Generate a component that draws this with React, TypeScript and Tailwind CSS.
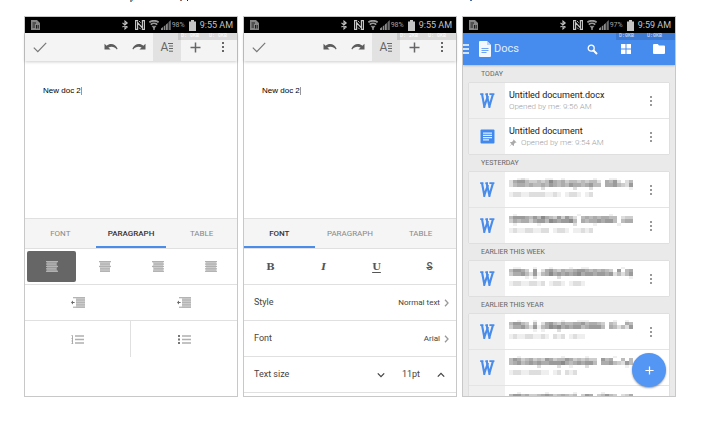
import React, { useState } from 'react';
import clsx from 'clsx';

type TabName = 'FONT' | 'PARAGRAPH' | 'TABLE';

const TABS: TabName[] = ['FONT', 'PARAGRAPH', 'TABLE'];

/* ---------- icons ---------- */

const MoreIcon = () => (
  <svg width="4" height="12" viewBox="0 0 4 12" fill="currentColor">
    <rect x="1" y="1" width="2" height="2" />
    <rect x="1" y="5" width="2" height="2" />
    <rect x="1" y="9" width="2" height="2" />
  </svg>
);

const UndoIcon = ({ flipped = false }: { flipped?: boolean }) => (
  <svg
    width="14"
    height="8"
    viewBox="0 0 14 8"
    className={clsx('text-[#5c5c5c]', flipped && '-scale-x-100')}
  >
    <path
      d="M0.5 0.8V6.6H6.6L4.4 4.6C7 3 10.6 3.4 12.8 6.4L13.6 5.8C11.9 1 6.3 -0.3 2.6 2.7Z"
      fill="currentColor"
    />
  </svg>
);

const CheckIcon = () => (
  <svg width="14" height="11" viewBox="0 0 14 11" fill="none" stroke="#777" strokeWidth="1.2">
    <path d="M0.8 5.6 4.8 9.6 13.2 0.8" />
  </svg>
);

const PlusIcon = ({ size }: { size: number }) => (
  <svg width={size} height={size} viewBox="0 0 11 11" stroke="currentColor" strokeWidth="1.5">
    <path d="M5.5 0.5V10.5M0.5 5.5H10.5" />
  </svg>
);

const Chevron = ({ d, faint = false }: { d: string; faint?: boolean }) => (
  <svg
    width="8"
    height="8"
    viewBox="0 0 8 8"
    fill="none"
    stroke={faint ? '#999' : '#444'}
    strokeWidth="1.3"
  >
    <path d={d} />
  </svg>
);

const LINES: Record<string, number[][]> = {
  left: [[0, 12], [0, 10], [0, 12], [0, 10], [0, 12]],
  center: [[0, 12], [1, 10], [0, 12], [1, 10], [1, 10]],
  right: [[0, 12], [2, 10], [0, 12], [2, 10], [1, 11]],
  justify: [[0, 12], [0, 12], [0, 12], [0, 12], [0, 12]],
};

const AlignIcon = ({ kind }: { kind: string }) => (
  <svg width="12" height="11" viewBox="0 0 12 11">
    <rect x="1" width="10" height="11" fill="currentColor" opacity="0.6" />
    {LINES[kind].map(([x, w], i) => (
      <rect key={i} x={x} y={i * 2.4} width={w} height="1.3" fill="currentColor" />
    ))}
  </svg>
);

const IndentIcon = () => (
  <svg width="14" height="11" viewBox="0 0 14 11">
    <path d="M0 5.5 2 3.6V4.9H3.6V6.1H2V7.4Z" fill="#666" />
    <rect x="5" width="9" height="11" fill="#d0d0d0" />
    {[0, 2.4, 4.8, 7.2, 9.6].map((y) => (
      <rect key={y} x={y === 0 || y === 9.6 ? 2 : 5} y={y} width={y === 0 || y === 9.6 ? 12 : 9} height="1.3" fill="#b4b4b4" />
    ))}
  </svg>
);

const ListIcon = ({ numbered = false }: { numbered?: boolean }) => (
  <svg width="13" height="9" viewBox="0 0 13 9">
    {numbered ? (
      <path d="M0.5 0.5H1.5V8.5M0.5 3.5H2M0.5 8.5H2.2M0.5 6H2" stroke="#a3a3a3" fill="none" strokeWidth="0.9" />
    ) : (
      <path d="M0 1H2M0 4.5H2M0 8H2" stroke="#777" strokeWidth="1.8" />
    )}
    <path d="M4 1H13M4 4.5H13M4 8H13" stroke="#b0b0b0" strokeWidth="1.5" />
  </svg>
);

// file type mark: two overlapping slab strokes
const WordMark = () => (
  <svg width="15" height="15" viewBox="0 0 15 15" fill="none" stroke="#4a8cea" strokeWidth="2.1">
    <path d="M2 1 4.3 13.4 7.9 3" />
    <path d="M6.6 1 9.4 13.4 12.9 1.4" />
    <path d="M0.2 1.1H3.4M5.4 1.1H8M9.4 1.1H14.4" strokeWidth="1.8" />
    <path d="M3.6 13.9H5.2M8.7 13.9H10.3" strokeWidth="1.6" />
  </svg>
);

const DocMark = () => (
  <svg width="15" height="15" viewBox="0 0 15 15">
    <rect x="0.5" y="0.5" width="14" height="14" rx="1" fill="#4189ee" />
    <path d="M3 4.2H12M3 6.4H12M3 8.6H12M3 10.8H9" stroke="#e3eefc" strokeWidth="1.2" />
  </svg>
);

const PinIcon = () => (
  <svg width="8" height="8" viewBox="0 0 8 8" fill="#aaa">
    <path d="M4.6 0.4 7.6 3.4 6.9 3.8 6.4 3.6 5 5 5 6.4 4.4 7 2.8 5.4 0.6 7.6 0.4 7.4 2.5 5.1 1 3.6 1.6 3 3 3 4.4 1.6 4.2 1.1Z" />
  </svg>
);

/* ---------- shared chrome ---------- */

function StatusBar({ battery, time }: { battery: string; time: string }) {
  return (
    <div className="flex h-4 items-center bg-black pr-1 pl-1.5 text-[#c4c4c4]">
      <svg width="9" height="10" viewBox="0 0 9 10">
        <path d="M0 0H6L9 3V10H0Z" fill="#858585" />
        <path d="M1.5 3H5M1.5 5H4M1.5 7H4M5.5 5V8.5M7.2 5V8.5" stroke="#1c1c1c" />
      </svg>
      <div className="ml-auto flex items-center">
        <svg width="8" height="10" viewBox="0 0 8 10" fill="none" stroke="currentColor" strokeWidth="1.1">
          <path d="M1.5 2.8 6.2 7 4 8.9V1.1L6.2 3 1.5 7.2" />
        </svg>
        <svg className="ml-1.5" width="10" height="10" viewBox="0 0 10 10" fill="none" stroke="currentColor">
          <path d="M3.2 0.6H0.6V9.4H2.6V2.6L7.4 8V0.6H9.4V9.4H6.8" strokeWidth="1.2" />
          <path d="M4 1 5.6 2.6M4.2 7.6 5.6 9.2" strokeWidth="0.9" />
        </svg>
        <svg className="ml-1" width="10" height="10" viewBox="0 0 10 10" fill="none" stroke="#999">
          <path d="M0.4 2.4C3 0.2 7 0.2 9.6 2.4" strokeWidth="1.8" />
          <path d="M1.8 4.6C3.6 3 6.4 3 8.2 4.6" strokeWidth="1.8" />
          <path d="M3 6.2H7L5 8.4Z" fill="#999" strokeWidth="0.6" />
          <path d="M5 7V10" strokeWidth="1.4" />
        </svg>
        <svg className="ml-0.5" width="10" height="10" viewBox="0 0 10 10">
          <path d="M0 10V8.4L2 7V10ZM2.7 10V6.4L4.4 5V10ZM5 10V4.6L6.8 3V10Z" fill="#8c8c8c" />
          <path d="M7.5 10V2.2L9.8 0V10Z" fill="#6b6b6b" />
        </svg>
        <span className="ml-px text-[7px] leading-none text-[#a0a0a0]">{battery}</span>
        <svg className="ml-1" width="7" height="11" viewBox="0 0 7 11" fill="currentColor">
          <path d="M2 0H5V1.4H7V11H0V1.4H2Z" />
        </svg>
        <span className="ml-1 text-[9px] leading-4">{time}</span>
      </div>
    </div>
  );
}

function NetSpeed({ down, up, blue = false }: { down: string; up: string; blue?: boolean }) {
  return (
    <div
      className={clsx(
        "pointer-events-none absolute top-0 right-0 grid h-[7px] w-[59px] grid-cols-2 pl-[3px] font-['Liberation_Mono',monospace] text-[5px] leading-[7px]",
        blue ? 'bg-[#3b79d2] text-white/80' : 'bg-black/10 text-white',
      )}
    >
      <span>{down}</span>
      <span>{up}</span>
    </div>
  );
}

/* ---------- editor screens ---------- */

function ToolButton({ label, active, children }: { label: string; active?: boolean; children: React.ReactNode }) {
  return (
    <button
      aria-label={label}
      className={clsx('flex h-7 w-7 items-center justify-center text-[#666]', active && 'bg-[#e2e2e2]')}
    >
      {children}
    </button>
  );
}

function ParagraphPanel() {
  const [align, setAlign] = useState('left');
  return (
    <div>
      <div className="grid h-9 grid-cols-4 border-b border-[#e0e0e0]">
        {Object.keys(LINES).map((kind) => (
          <button
            key={kind}
            aria-label={`Align ${kind}`}
            onClick={() => setAlign(kind)}
            className={clsx(
              'm-0.5 flex items-center justify-center rounded-xs',
              align === kind ? 'bg-[#666] text-[#b4b4b4]' : 'text-[#b0b0b0]',
            )}
          >
            <AlignIcon kind={kind} />
          </button>
        ))}
      </div>
      <div className="grid h-9 grid-cols-2 border-b border-[#e0e0e0]">
        <button aria-label="Decrease indent" className="flex items-center justify-center">
          <IndentIcon />
        </button>
        <button aria-label="Increase indent" className="flex items-center justify-center">
          <IndentIcon />
        </button>
      </div>
      <div className="grid h-9 grid-cols-2">
        <button aria-label="Numbered list" className="flex items-center justify-center border-r border-[#e0e0e0]">
          <ListIcon numbered />
        </button>
        <button aria-label="Bulleted list" className="flex items-center justify-center">
          <ListIcon />
        </button>
      </div>
    </div>
  );
}

function FontPanel() {
  const [size, setSize] = useState(11);
  const rows = [
    { label: 'Style', value: 'Normal text' },
    { label: 'Font', value: 'Arial' },
  ];
  return (
    <div className="text-[9px] text-[#444]">
      <div className="grid h-9 grid-cols-4 border-b border-[#e0e0e0] font-['DejaVu_Serif',serif] text-[10px] font-bold text-[#555]">
        <button aria-label="Bold">B</button>
        <button aria-label="Italic" className="italic">I</button>
        <button aria-label="Underline" className="underline underline-offset-2">U</button>
        <button aria-label="Strikethrough" className="font-['Roboto',sans-serif] font-medium line-through">S</button>
      </div>
      {rows.map((row) => (
        <button
          key={row.label}
          className="flex h-9 w-full items-center border-b border-[#e0e0e0] pr-1.5 pl-2.5"
        >
          <span>{row.label}</span>
          <span className="mr-0.5 ml-auto text-[8px]">{row.value}</span>
          <Chevron d="M3 0.8 6 4 3 7.2" faint />
        </button>
      ))}
      <div className="flex h-9 items-center border-b border-[#e0e0e0] pl-2.5">
        <span className="mr-auto">Text size</span>
        <button aria-label="Smaller" onClick={() => setSize(size - 1)} className="flex w-[30px] justify-center">
          <Chevron d="M0.8 2.4 4 5.6 7.2 2.4" />
        </button>
        <span className="w-[30px] text-center">{size}pt</span>
        <button aria-label="Larger" onClick={() => setSize(size + 1)} className="flex w-[30px] justify-center">
          <Chevron d="M0.8 5.6 4 2.4 7.2 5.6" />
        </button>
      </div>
    </div>
  );
}

function EditorScreen({ initialTab, down }: { initialTab: TabName; down: string }) {
  const [tab, setTab] = useState<TabName>(initialTab);

  return (
    <section className="flex flex-col border border-[#c8c8c8] bg-white pb-[3px]">
      <StatusBar battery="98%" time="9:55 AM" />
      <div className="relative flex h-7 items-center bg-[#f4f4f4] pl-2 shadow-[0_1px_3px_rgba(0,0,0,0.2)]">
        <button aria-label="Done" className="mr-auto">
          <CheckIcon />
        </button>
        <ToolButton label="Undo">
          <UndoIcon />
        </ToolButton>
        <ToolButton label="Redo">
          <UndoIcon flipped />
        </ToolButton>
        <ToolButton label="Format" active>
          <span className="text-[12px] leading-none">A</span>
          <svg width="5" height="9" viewBox="0 0 5 9" stroke="#666">
            <path d="M0 0.5H5M1 3H5M1 5.5H5M1 8.2H5" />
          </svg>
        </ToolButton>
        <ToolButton label="Insert">
          <PlusIcon size={11} />
        </ToolButton>
        <ToolButton label="More">
          <MoreIcon />
        </ToolButton>
        <NetSpeed down={down} up="U: 0KB" />
      </div>

      <div className="flex h-[157px] items-start pt-6 pl-[18px]">
        <textarea
          aria-label="Document"
          rows={1}
          defaultValue="New doc 2"
          className="field-sizing-content resize-none overflow-hidden font-['Liberation_Sans',sans-serif] text-[8px] leading-3 text-black outline-none"
        />
        <span className="mt-0.5 h-2 w-px bg-[#999]" />
      </div>

      <div role="tablist" className="grid h-[31px] grid-cols-3 border-y border-[#e0e0e0] bg-[#f5f5f5]">
        {TABS.map((name) => (
          <button
            key={name}
            role="tab"
            aria-selected={tab === name}
            onClick={() => setTab(name)}
            className={clsx(
              'border-b-2 pt-0.5 text-[8px]',
              tab === name ? 'border-[#4a8cea] font-medium text-[#333]' : 'border-transparent text-[#888]',
            )}
          >
            {name}
          </button>
        ))}
      </div>
      {tab === 'PARAGRAPH' && <ParagraphPanel />}
      {tab === 'FONT' && <FontPanel />}
    </section>
  );
}

/* ---------- file list screen ---------- */

interface DocFile {
  title?: string;
  opened?: string;
  pinned?: boolean;
  // darkness 0-9 per cell, for names that are obscured
  mosaic?: string[];
}

const GROUPS: { name: string; files: DocFile[] }[] = [
  {
    name: 'TODAY',
    files: [
      { title: 'Untitled document.docx', opened: 'Opened by me: 9:56 AM' },
      { title: 'Untitled document', opened: 'Opened by me: 9:54 AM', pinned: true },
    ],
  },
  {
    name: 'YESTERDAY',
    files: [
      {
        mosaic: [
          '00121000011001000000010001100000',
          '25664334347545344343442054620240',
          '24554544546545465545644055643264',
          '00000000200000002000200000000010',
          '12211222211210122101200000000000',
        ],
      },
      {
        mosaic: [
          '01000000000000000100000001000000',
          '46665464754363642045454554402332',
          '35455356647656674054556566404554',
          '01000001000000002000010000010000',
          '12112211220122101121200000000000',
        ],
      },
    ],
  },
  {
    name: 'EARLIER THIS WEEK',
    files: [
      {
        mosaic: [
          '01100010001000010011000000001000',
          '46653060256435445665454543060450',
          '35564261457565656756656656242463',
          '00001020000020000000000000000010',
          '12211221201221012210000000000000',
        ],
      },
    ],
  },
  {
    name: 'EARLIER THIS YEAR',
    files: [
      {
        mosaic: [
          '00100010000001000111000000100100',
          '46643040256435445564554304300540',
          '35564261457675656645666405424260',
          '00000010100020000000000000000000',
          '12112211210212012110000000000000',
        ],
      },
      {
        mosaic: [
          '00100000000001000001000000100000',
          '46534534365344653434330645004046',
          '45645656556667545656640556432642',
          '00000002000020010002000000000100',
          '12211222110120212000000000000000',
        ],
      },
      {
        mosaic: [
          '00100000010000001000000100000000',
          '46645334565345434036503464302350',
          '35655456546556454055605556404460',
          '00000000200000010000000000000000',
          '12211222211210122101200000000000',
        ],
      },
    ],
  },
];

// y and height of each mosaic row
const MOSAIC_ROWS = [
  [0, 2],
  [2, 3],
  [5, 4],
  [9, 3],
  [14, 5],
];

const Mosaic = ({ rows }: { rows: string[] }) => (
  <svg width="128" height="23" viewBox="0 0 128 23" className="blur-[0.4px]">
    {rows.flatMap((row, r) =>
      row.split('').map((shade, c) => (
        <rect
          key={`${r}-${c}`}
          x={c * 4}
          y={MOSAIC_ROWS[r][0]}
          width="4"
          height={MOSAIC_ROWS[r][1]}
          fill="#222"
          opacity={Number(shade) * 0.075}
        />
      )),
    )}
  </svg>
);

function FileRow({ file }: { file: DocFile }) {
  return (
    <li className="box-content flex h-[35px]">
      <div className="flex w-9 shrink-0 items-center justify-center bg-[#f0f0f0]">
        {file.pinned ? <DocMark /> : <WordMark />}
      </div>
      <div className="flex min-w-0 flex-1 flex-col justify-center overflow-hidden pl-1 whitespace-nowrap">
        {file.mosaic ? (
          <Mosaic rows={file.mosaic} />
        ) : (
          <>
            <a href="#" className="text-[9px] leading-3 text-[#222]">
              {file.title}
            </a>
            <span className="flex items-center gap-1 text-[8px] leading-3 font-light text-[#a0a0a0]">
              {file.pinned && <PinIcon />}
              {file.opened}
            </span>
          </>
        )}
      </div>
      <button aria-label="File options" className="flex w-9 shrink-0 items-center justify-center text-[#999]">
        <MoreIcon />
      </button>
    </li>
  );
}

function DocsScreen() {
  return (
    <section className="relative flex flex-col overflow-hidden border border-[#c8c8c8] bg-[#eaeaea]">
      <StatusBar battery="97%" time="9:59 AM" />
      <header className="relative z-10 flex h-8 shrink-0 items-center bg-[#468bee] text-white shadow-[0_1px_2px_rgba(0,0,0,0.2)]">
        <button aria-label="Menu">
          <svg width="6" height="10" viewBox="0 0 6 10" stroke="currentColor" strokeWidth="1.5">
            <path d="M0 1H6M0 5H6M0 9H6" />
          </svg>
        </button>
        <svg className="ml-2.5" width="12" height="16" viewBox="0 0 12 16">
          <path d="M1 0H8L12 4V15Q12 16 11 16H1Q0 16 0 15V1Q0 0 1 0Z" fill="#f3f7fe" />
          <path d="M8 0V4H12Z" fill="#b9d2f8" />
          <path d="M2.5 7.5H9.5M2.5 9.5H9.5M2.5 11.5H7.5" stroke="#6ea4f1" strokeWidth="1.2" />
        </svg>
        <h1 className="mr-auto ml-[3px] text-[11px] text-[#e3eefd]">Docs</h1>
        <button aria-label="Search" className="flex w-[33px] justify-center">
          <svg width="11" height="11" viewBox="0 0 11 11" fill="none" stroke="currentColor">
            <circle cx="4.2" cy="4.2" r="3" strokeWidth="1.3" />
            <path d="M6.5 6.5 10 10" strokeWidth="1.9" />
          </svg>
        </button>
        <button aria-label="Grid view" className="flex w-[33px] justify-center">
          <svg width="10" height="10" viewBox="0 0 10 10" fill="currentColor">
            <path d="M0 0H4.5V4.5H0ZM5.5 0H10V4.5H5.5ZM0 5.5H4.5V10H0ZM5.5 5.5H10V10H5.5Z" />
          </svg>
        </button>
        <button aria-label="Folders" className="flex w-[33px] justify-center">
          <svg width="12" height="10" viewBox="0 0 12 10" fill="currentColor">
            <path d="M1 0H4.8L6 1.4H11Q12 1.4 12 2.4V9Q12 10 11 10H1Q0 10 0 9V1Q0 0 1 0Z" />
          </svg>
        </button>
        <NetSpeed down="D:0KB" up="U:0KB" blue />
      </header>

      {/* takes its height from the neighbouring screens */}
      <div className="h-0 flex-auto overflow-hidden px-1.5">
        {GROUPS.map((group) => (
          <div key={group.name}>
            <h2 className="h-[18px] pl-3 text-[7px] leading-[18px] text-[#666]">{group.name}</h2>
            <ul className="divide-y divide-[#e4e4e4] bg-white shadow-[0_0_1px_rgba(0,0,0,0.25)]">
              {group.files.map((file, i) => (
                <FileRow key={i} file={file} />
              ))}
            </ul>
          </div>
        ))}
      </div>

      <button
        aria-label="New document"
        className="absolute right-[9px] bottom-[9px] flex h-[34px] w-[34px] items-center justify-center rounded-full bg-[#5496f3] text-white shadow-[0_1px_2px_rgba(0,0,0,0.4)]"
      >
        <PlusIcon size={9} />
      </button>
    </section>
  );
}

export default function App() {
  return (
    <main className="bg-white pr-7 pb-7 pl-6 font-['Roboto',sans-serif]">
      {/* tails of the line above */}
      <svg width="100%" height="2" className="mb-3.5 block">
        <rect x="106" width="2" height="2" fill="#a98574" />
        <rect x="108" width="1" height="1" fill="#74b4e4" />
        <rect x="156" width="2" height="1" fill="#a06a5c" />
        <rect x="163" width="1" height="1" fill="#222" />
        <rect x="446" width="2" height="1" fill="#4f6f9f" />
      </svg>
      <div className="grid grid-cols-3 gap-[5px]">
        <EditorScreen initialTab="PARAGRAPH" down="D: 0KB" />
        <EditorScreen initialTab="FONT" down="D: 2KB" />
        <DocsScreen />
      </div>
    </main>
  );
}
